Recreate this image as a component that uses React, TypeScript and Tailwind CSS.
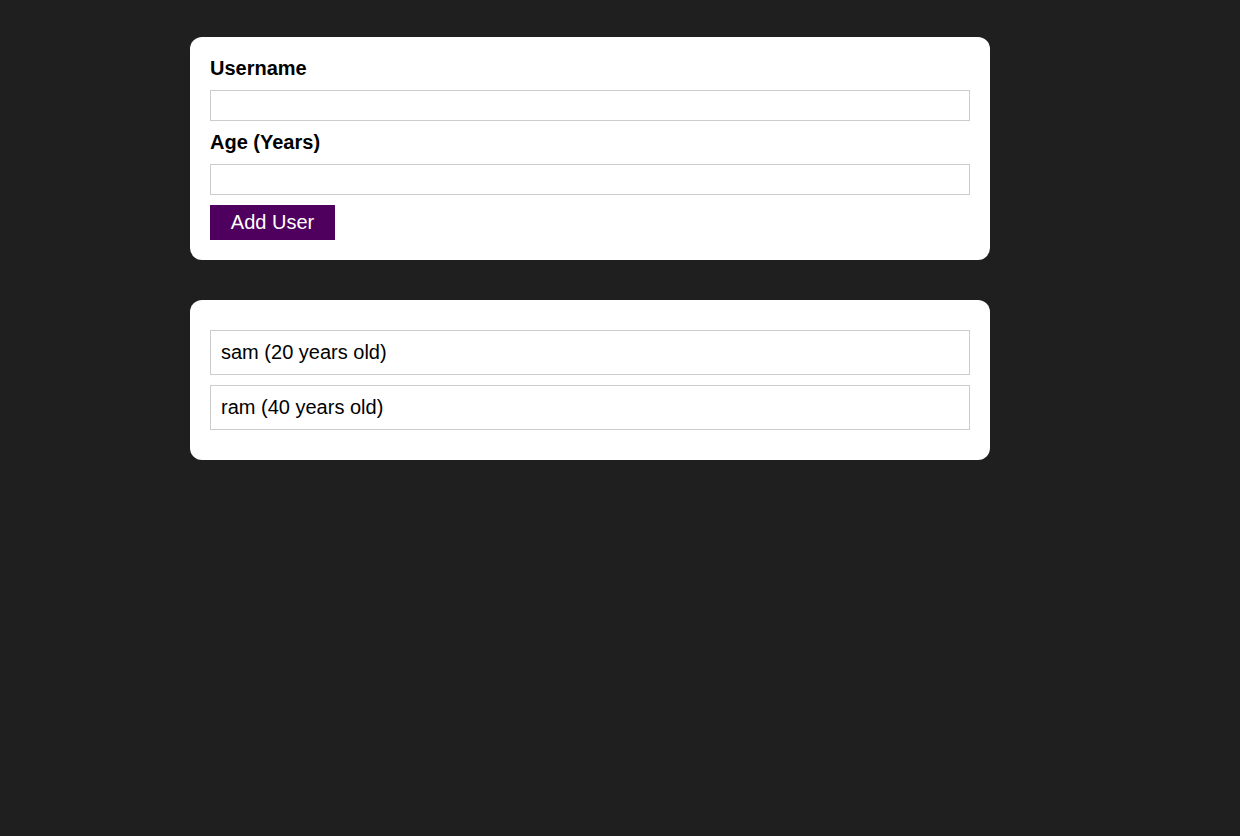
import React from "react";

type User = { name: string; age: number };

const users: User[] = [
  { name: "sam", age: 20 },
  { name: "ram", age: 40 },
];

const Card = ({ children, className = "" }: { children: React.ReactNode; className?: string }) => (
  <div className={`w-[800px] ml-[190px] bg-white rounded-[12px] ${className}`}>{children}</div>
);

const App = () => {
  return (
    <div className="min-h-screen bg-[#1f1f1f] pt-[37px] font-['Liberation_Sans',Arial,sans-serif]">
      <Card className="p-5">
        <form onSubmit={(e) => e.preventDefault()}>
          <label className="block text-[20px] leading-[23px] font-bold text-black mb-[10px]">Username</label>
          <input type="text" className="block w-full h-[31px] border border-[#ccc] outline-none px-1 mb-[10px]" />
          <label className="block text-[20px] leading-[23px] font-bold text-black mb-[10px]">Age (Years)</label>
          <input type="number" className="block w-full h-[31px] border border-[#ccc] outline-none px-1 mb-[10px]" />
          <button type="submit" className="block w-[125px] h-[35px] bg-[#4f005f] text-white text-[20px] leading-[23px]">
            Add User
          </button>
        </form>
      </Card>
      <Card className="mt-10 px-5 py-[30px]">
        <ul className="flex flex-col gap-[10px]">
          {users.map((u) => (
            <li key={u.name} className="border border-[#ccc] px-[10px] py-[10px] text-[20px] leading-[23px] text-black">
              {u.name} ({u.age} years old)
            </li>
          ))}
        </ul>
      </Card>
    </div>
  );
};

export default App;
